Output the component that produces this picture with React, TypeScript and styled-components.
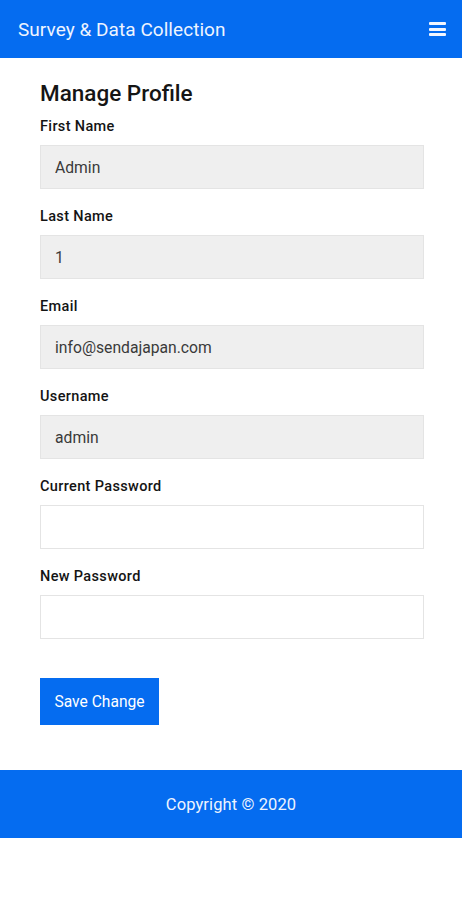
import React from "react";
import styled, { createGlobalStyle } from "styled-components";

const GlobalStyle = createGlobalStyle`
  body {
    margin: 0;
    background: #ffffff;
    font-family: Roboto, "Liberation Sans", Arial, sans-serif;
  }
`;

const BLUE = "#056cf0";

const Header = styled.header`
  height: 58px;
  background: ${BLUE};
  display: flex;
  align-items: center;
  justify-content: space-between;
  padding: 0 16px 0 18px;
  box-sizing: border-box;
`;

const Brand = styled.span`
  color: #eef4ff;
  font-size: 19px;
  letter-spacing: 0.05px;
`;

const MenuButton = styled.button`
  border: none;
  background: transparent;
  padding: 0;
  display: flex;
  flex-direction: column;
  gap: 2.5px;
  width: 17px;
  cursor: pointer;
`;

const MenuBar = styled.span`
  display: block;
  height: 3px;
  border-radius: 1px;
  background: #f2f6ff;
`;

const Main = styled.main`
  padding: 21px 38px 45px 40px;
`;

const Title = styled.h1`
  margin: 0 0 10px;
  font-size: 22.5px;
  line-height: 28px;
  font-weight: 500;
  color: #151515;
`;

const Field = styled.div`
  display: flex;
  flex-direction: column;
  margin-bottom: 18px;
`;

const Label = styled.label`
  font-size: 14.5px;
  line-height: 20px;
  font-weight: 500;
  letter-spacing: 0.35px;
  color: #141414;
  margin-bottom: 8px;
`;

const Input = styled.input<{ $filled?: boolean }>`
  height: 44px;
  box-sizing: border-box;
  border: 1px solid #e4e4e4;
  background: ${(p) => (p.$filled ? "#efefef" : "#ffffff")};
  padding: 0 14px;
  font-family: inherit;
  font-size: 15.7px;
  color: #3a3a3a;
  outline: none;
`;

const SaveButton = styled.button`
  margin-top: 21px;
  width: 119px;
  height: 47px;
  border: none;
  background: ${BLUE};
  color: #ffffff;
  font-family: inherit;
  font-size: 15.6px;
  cursor: pointer;
`;

const Footer = styled.footer`
  height: 68px;
  background: ${BLUE};
  display: flex;
  align-items: center;
  justify-content: center;
  color: #eef4ff;
  font-size: 16.5px;
  letter-spacing: 0.1px;
`;

const fields = [
  { label: "First Name", value: "Admin", type: "text" },
  { label: "Last Name", value: "1", type: "text" },
  { label: "Email", value: "info@sendajapan.com", type: "text" },
  { label: "Username", value: "admin", type: "text" },
  { label: "Current Password", value: "", type: "password" },
  { label: "New Password", value: "", type: "password" },
];

export default function App() {
  return (
    <>
      <GlobalStyle />
      <Header>
        <Brand>Survey &amp; Data Collection</Brand>
        <MenuButton aria-label="menu">
          <MenuBar />
          <MenuBar />
          <MenuBar />
        </MenuButton>
      </Header>
      <Main>
        <Title>Manage Profile</Title>
        {fields.map((f) => (
          <Field key={f.label}>
            <Label>{f.label}</Label>
            <Input
              type={f.type}
              defaultValue={f.value}
              $filled={f.type === "text"}
              readOnly={f.type === "text"}
            />
          </Field>
        ))}
        <SaveButton>Save Change</SaveButton>
      </Main>
      <Footer>Copyright © 2020</Footer>
    </>
  );
}
